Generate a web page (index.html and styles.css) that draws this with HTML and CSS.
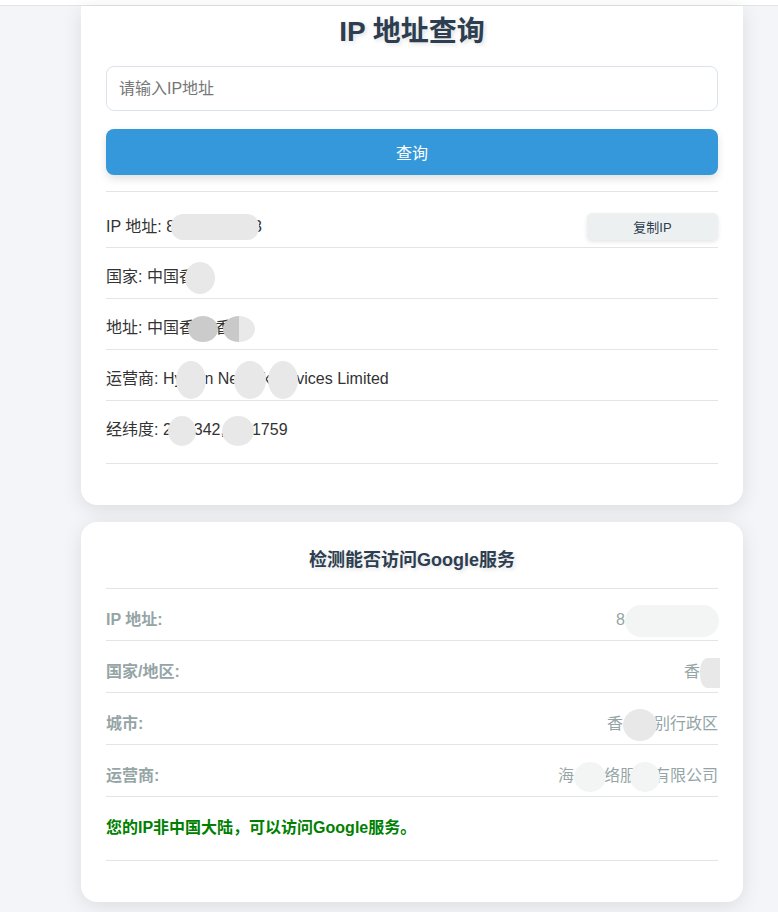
FILE: index.html
```html
<!DOCTYPE html>
<html lang="zh-CN">
<head>
    <meta charset="UTF-8">
    <meta name="viewport" content="width=device-width, initial-scale=1.0">
    <title>IP 地址查询</title>
    <link rel="stylesheet" href="styles.css">
</head>
<body>
    <div class="topbar"></div>

    <div class="page">
        <div class="card card-top">
            <h1>IP 地址查询</h1>

            <input type="text" id="ipInput" class="ip-input" placeholder="请输入IP地址">
            <button class="query-btn" onclick="queryIP()">查询</button>

            <div class="result">
                <div class="row row-first">
                    <span>IP 地址: 8<span class="blob b-ip"></span>3</span>
                    <button class="copy-btn">复制IP</button>
                </div>
                <div class="row">国家: 中国香<span class="blob b-country"></span></div>
                <div class="row">地址: 中国香<span class="blob dark b-addr1"></span>香<span class="blob half b-addr2"></span></div>
                <div class="row">运营商: Hy<span class="blob b-isp1"></span>n Ne<span class="blob b-isp2"></span>k<span class="blob b-isp3"></span>vices Limited</div>
                <div class="row row-last">经纬度: 2<span class="blob b-geo1"></span>342,<span class="blob b-geo2"></span>1759</div>
            </div>
        </div>

        <div class="card">
            <h2>检测能否访问Google服务</h2>

            <div class="check">
                <div class="check-row">
                    <span class="label">IP 地址:</span>
                    <span class="value">8<span class="blob faint b-v-ip"></span></span>
                </div>
                <div class="check-row">
                    <span class="label">国家/地区:</span>
                    <span class="value">香<span class="blob b-v-country"></span></span>
                </div>
                <div class="check-row">
                    <span class="label">城市:</span>
                    <span class="value">香<span class="blob b-v-city"></span>别行政区</span>
                </div>
                <div class="check-row">
                    <span class="label">运营商:</span>
                    <span class="value">海<span class="blob faint b-v-isp1"></span>络服<span class="blob faint b-v-isp2"></span>有限公司</span>
                </div>
                <div class="check-msg">您的IP非中国大陆，可以访问Google服务。</div>
            </div>
        </div>
    </div>

    <script>
        function queryIP() {
            const ip = document.getElementById('ipInput').value;
            console.log('query:', ip);
        }
    </script>
</body>
</html>
```

FILE: styles.css
```css
body {
    font-family: "Liberation Sans", Arial, "Noto Sans CJK SC", sans-serif;
    margin: 0;
    padding: 0;
    background-color: #f4f5f9;
    color: #333;
}
.topbar {
    height: 5px;
    background-color: #fff;
    border-bottom: 1px solid #e2e3e6;
}
.page {
    width: 662px;
    margin-left: 81px;
    padding-bottom: 20px;
}
.card {
    background-color: #fff;
    padding: 26px 25px 41px;
    border-radius: 16px;
    box-shadow: 0 4px 20px rgba(0, 0, 0, 0.1);
    margin-top: 17px;
}
.card-top {
    margin-top: 0;
    padding-top: 8px;
    border-radius: 0 0 16px 16px;
}
h1 {
    margin: 0 0 16px;
    font-size: 28px;
    line-height: 36px;
    text-align: center;
    color: #2c3e50;
    text-shadow: 2px 2px 4px rgba(0, 0, 0, 0.12);
}
h2 {
    margin: 0 0 16px;
    font-size: 18px;
    line-height: 24px;
    text-align: center;
    color: #2c3e50;
    text-shadow: 2px 2px 4px rgba(0, 0, 0, 0.12);
}
.ip-input {
    display: block;
    width: 100%;
    height: 45px;
    padding: 0 12px;
    box-sizing: border-box;
    border: 1px solid #dde3ea;
    border-radius: 8px;
    font-family: inherit;
    font-size: 16px;
    color: #333;
    outline: none;
}
.ip-input::placeholder {
    color: #777;
}
.query-btn {
    display: block;
    width: 100%;
    height: 46px;
    margin-top: 18px;
    background-color: #3498db;
    color: #fff;
    border: none;
    border-radius: 8px;
    font-family: inherit;
    font-size: 16px;
    box-shadow: 0 4px 8px rgba(0, 0, 0, 0.12);
    cursor: pointer;
}
.result {
    margin-top: 16px;
    border-top: 1px solid #e1e4e8;
}
.row {
    height: 22px;
    padding: 18px 0 10px;
    line-height: 22px;
    font-size: 16px;
    border-bottom: 1px solid #e1e4e8;
    white-space: nowrap;
}
.row-first {
    height: 27px;
    display: flex;
    justify-content: space-between;
    align-items: center;
    padding: 21px 0 7px;
}
.row-last {
    padding-bottom: 22px;
}
.copy-btn {
    width: 131px;
    height: 27px;
    background-color: #ecf0f1;
    color: #2c3e50;
    border: none;
    border-radius: 5px;
    font-family: inherit;
    font-size: 13px;
    box-shadow: 0 2px 4px rgba(0, 0, 0, 0.1);
    cursor: pointer;
}
.check {
    border-top: 1px solid #e1e4e8;
}
.check-row {
    display: flex;
    justify-content: space-between;
    align-items: center;
    height: 22px;
    padding: 20px 0 9px;
    line-height: 22px;
    font-size: 16px;
    color: #95a5a6;
    border-bottom: 1px solid #e1e4e8;
    white-space: nowrap;
}
.check-row .label {
    font-weight: bold;
}
.check-msg {
    padding: 20px 0 21px;
    line-height: 22px;
    font-size: 16px;
    font-weight: bold;
    color: #008000;
    border-bottom: 1px solid #e1e4e8;
}

/* privacy blur patches */
.blob {
    display: inline-block;
    vertical-align: middle;
    margin-top: -10px;
    margin-bottom: -10px;
    background-color: #e8e8e8;
    border-radius: 50%;
    filter: blur(0.6px);
}
.blob.dark {
    background-color: #cbcbcb;
}
.blob.half {
    background: linear-gradient(to right, #c9c9c9 50%, #e9e9e9 50%);
}
.blob.faint {
    background-color: #f3f4f4;
}
.b-ip { width: 88px; height: 26px; margin-left: -4px; margin-right: -6px; border-radius: 12px; }
.b-country { width: 30px; height: 32px; margin-left: -10px; }
.b-addr1 { width: 30px; height: 26px; margin-left: -7px; margin-right: -3px; }
.b-addr2 { width: 32px; height: 26px; margin-left: -8px; }
.b-isp1 { width: 30px; height: 38px; margin-left: -6px; margin-right: -2px; }
.b-isp2 { width: 32px; height: 38px; margin-left: -4px; margin-right: -4px; }
.b-isp3 { width: 30px; height: 38px; margin-left: -2px; margin-right: -2px; }
.b-geo1 { width: 28px; height: 30px; margin-left: -4px; margin-right: -2px; }
.b-geo2 { width: 32px; height: 30px; margin-left: -3px; margin-right: -2px; }
.b-v-ip { width: 94px; height: 32px; margin-right: -1px; border-radius: 16px; }
.b-v-country { width: 20px; height: 30px; margin-right: -2px; border-radius: 40% 0 0 40%; }
.b-v-city { width: 34px; height: 32px; margin-right: -3px; }
.b-v-isp1 { width: 32px; height: 30px; margin-right: -2px; }
.b-v-isp2 { width: 30px; height: 30px; margin-left: -6px; margin-right: -6px; }
```
